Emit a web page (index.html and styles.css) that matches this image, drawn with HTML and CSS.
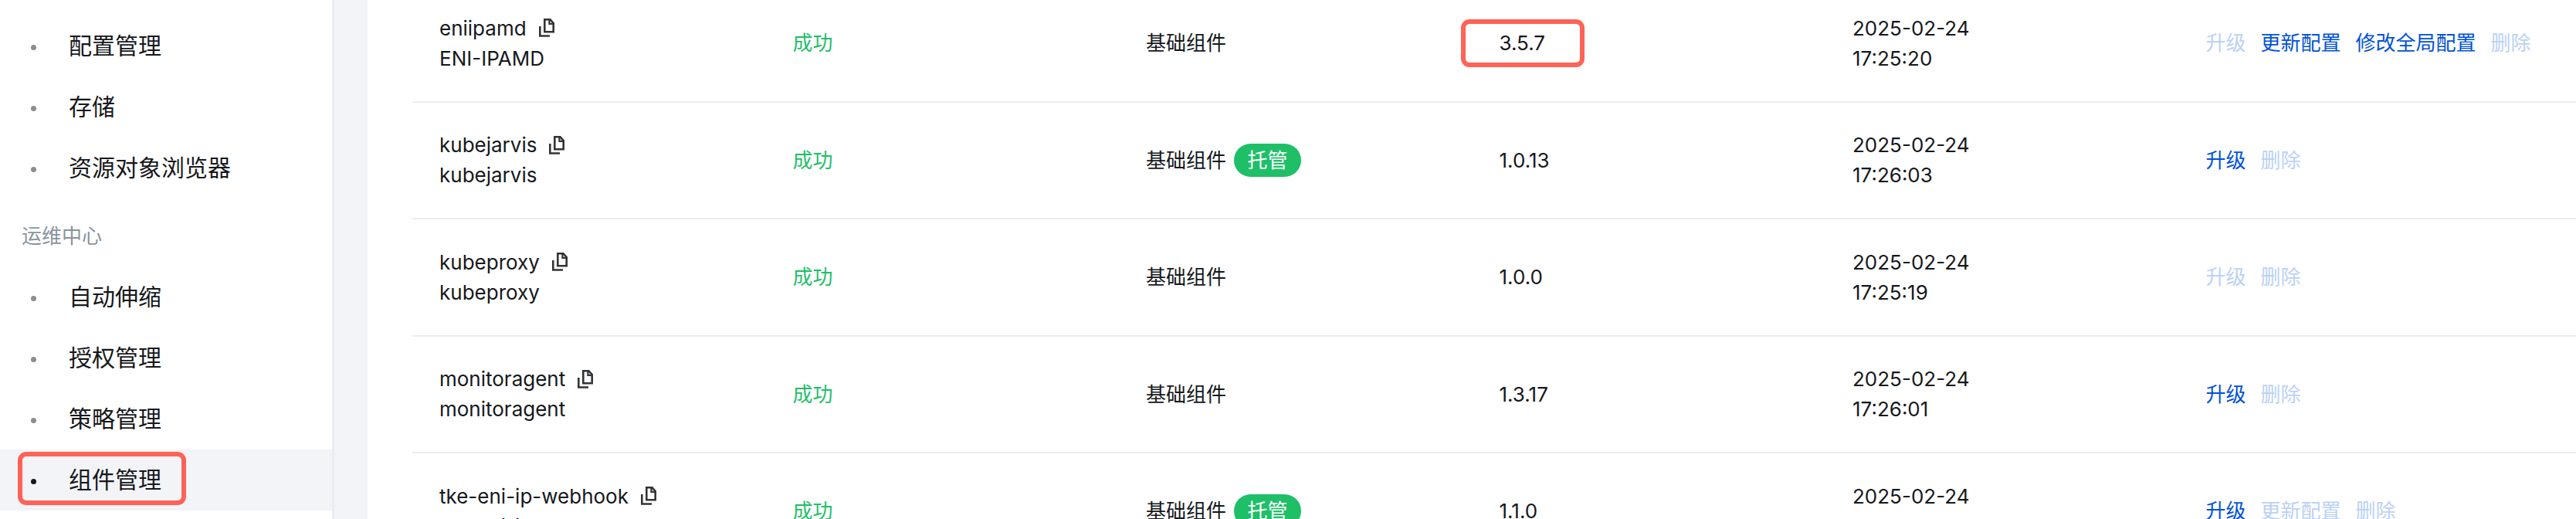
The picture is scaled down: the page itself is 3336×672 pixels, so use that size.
FILE: index.html
```html
<!DOCTYPE html>
<html lang="zh-CN">
<head>
    <meta charset="UTF-8">
    <meta name="viewport" content="width=device-width, initial-scale=1.0">
    <title>组件管理</title>
    <link rel="stylesheet" href="styles.css">
</head>
<body>
    <svg class="icon-defs" width="0" height="0">
        <symbol id="copy" viewBox="0 0 20 24">
            <path d="M7.3 1.3h7.2l4.2 4.6v11.4H7.3z" fill="none" stroke="currentColor" stroke-width="2.6"/>
            <path d="M13.4 1v5.8h5.6" fill="none" stroke="currentColor" stroke-width="2.2"/>
            <path d="M1.3 10v12.5H14" fill="none" stroke="currentColor" stroke-width="2.6"/>
        </symbol>
    </svg>
    <div class="page">
        <nav class="sidebar">
            <a class="nav-item">配置管理</a>
            <a class="nav-item">存储</a>
            <a class="nav-item">资源对象浏览器</a>
            <div class="nav-group">运维中心</div>
            <a class="nav-item">自动伸缩</a>
            <a class="nav-item">授权管理</a>
            <a class="nav-item">策略管理</a>
            <a class="nav-item active">组件管理<span class="mark mark-nav"></span></a>
        </nav>
        <div class="gutter"></div>
        <main class="content">
            <div class="rows">
                <div class="row">
                    <div class="name">
                        <div class="name-id">eniipamd <svg class="copy"><use href="#copy"/></svg></div>
                        <div>ENI-IPAMD</div>
                    </div>
                    <div class="status">成功</div>
                    <div class="type">基础组件</div>
                    <div class="version">3.5.7<span class="mark mark-version"></span></div>
                    <div class="date">2025-02-24<br>17:25:20</div>
                    <div class="ops"><a class="off">升级</a><a>更新配置</a><a>修改全局配置</a><a class="off">删除</a></div>
                </div>
                <div class="row">
                    <div class="name">
                        <div class="name-id">kubejarvis <svg class="copy"><use href="#copy"/></svg></div>
                        <div>kubejarvis</div>
                    </div>
                    <div class="status">成功</div>
                    <div class="type">基础组件<span class="badge">托管</span></div>
                    <div class="version">1.0.13</div>
                    <div class="date">2025-02-24<br>17:26:03</div>
                    <div class="ops"><a>升级</a><a class="off">删除</a></div>
                </div>
                <div class="row">
                    <div class="name">
                        <div class="name-id">kubeproxy <svg class="copy"><use href="#copy"/></svg></div>
                        <div>kubeproxy</div>
                    </div>
                    <div class="status">成功</div>
                    <div class="type">基础组件</div>
                    <div class="version">1.0.0</div>
                    <div class="date">2025-02-24<br>17:25:19</div>
                    <div class="ops"><a class="off">升级</a><a class="off">删除</a></div>
                </div>
                <div class="row">
                    <div class="name">
                        <div class="name-id">monitoragent <svg class="copy"><use href="#copy"/></svg></div>
                        <div>monitoragent</div>
                    </div>
                    <div class="status">成功</div>
                    <div class="type">基础组件</div>
                    <div class="version">1.3.17</div>
                    <div class="date">2025-02-24<br>17:26:01</div>
                    <div class="ops"><a>升级</a><a class="off">删除</a></div>
                </div>
                <div class="row">
                    <div class="name">
                        <div class="name-id">tke-eni-ip-webhook <svg class="copy"><use href="#copy"/></svg></div>
                        <div>tke-eni-ip-webhook</div>
                    </div>
                    <div class="status">成功</div>
                    <div class="type">基础组件<span class="badge">托管</span></div>
                    <div class="version">1.1.0</div>
                    <div class="date">2025-02-24<br>17:26:05</div>
                    <div class="ops"><a>升级</a><a class="off">更新配置</a><a class="off">删除</a></div>
                </div>
            </div>
        </main>
    </div>
</body>
</html>
```
FILE: styles.css
```css
html, body {
    margin: 0;
    height: 672px;
    overflow: hidden;
    background-color: #fff;
}

body {
    font-family: Inter, "Noto Sans CJK SC", sans-serif;
    font-size: 26px;
    line-height: 39px;
    color: #16181c;
}

.icon-defs {
    display: block;
}

.page {
    display: flex;
    height: 672px;
}

.sidebar {
    width: 430px;
    flex: none;
    padding-top: 20px;
    font-size: 30px;
}

.nav-item {
    display: block;
    position: relative;
    height: 79px;
    line-height: 79px;
    padding-left: 89px;
}

.nav-item::before {
    content: "";
    position: absolute;
    left: 40px;
    top: 38px;
    width: 7px;
    height: 7px;
    border-radius: 50%;
    background-color: #8a8d91;
}

.nav-item.active {
    background-color: #f2f4f8;
}

.nav-item.active::before {
    background-color: #16181c;
}

.nav-group {
    height: 88px;
    line-height: 88px;
    padding: 5px 0 0 28px;
    box-sizing: border-box;
    font-size: 26px;
    color: #8a949e;
}

.gutter {
    width: 46px;
    flex: none;
    box-sizing: border-box;
    background-color: #f2f4f8;
    border-left: 3px solid #e9ecf1;
}

.content {
    flex: 1;
    min-width: 0;
    padding-left: 58px;
}

.rows {
    margin-top: -19px;
}

.row {
    display: grid;
    grid-template-columns: repeat(5, 457.5px) 1fr;
    align-items: center;
    box-sizing: border-box;
    height: 151.5px;
    padding-left: 35px;
    border-bottom: 2px solid #e9edf2;
}

.name-id {
    display: flex;
    align-items: center;
}

.copy {
    width: 20px;
    height: 24px;
    margin-left: 16px;
    color: #333436;
}

.status {
    color: #1fbf68;
}

.type {
    display: flex;
    align-items: center;
}

.badge {
    width: 87px;
    height: 43px;
    line-height: 43px;
    margin-left: 10px;
    border-radius: 22px;
    text-align: center;
    color: #fff;
    background-color: #1fbf68;
}

.version {
    position: relative;
}

.ops {
    display: flex;
    gap: 19px;
}

.ops a {
    color: #0052d9;
}

.ops a.off {
    color: #bbd1f6;
}

/* red annotation boxes drawn over the page */
.mark {
    position: absolute;
    box-sizing: border-box;
    border: 6px solid #ff6257;
    border-radius: 11px;
}

.mark-nav {
    left: 23px;
    top: 3px;
    width: 218px;
    height: 69px;
}

.mark-version {
    left: -50px;
    top: -11px;
    width: 160px;
    height: 62px;
}
```
